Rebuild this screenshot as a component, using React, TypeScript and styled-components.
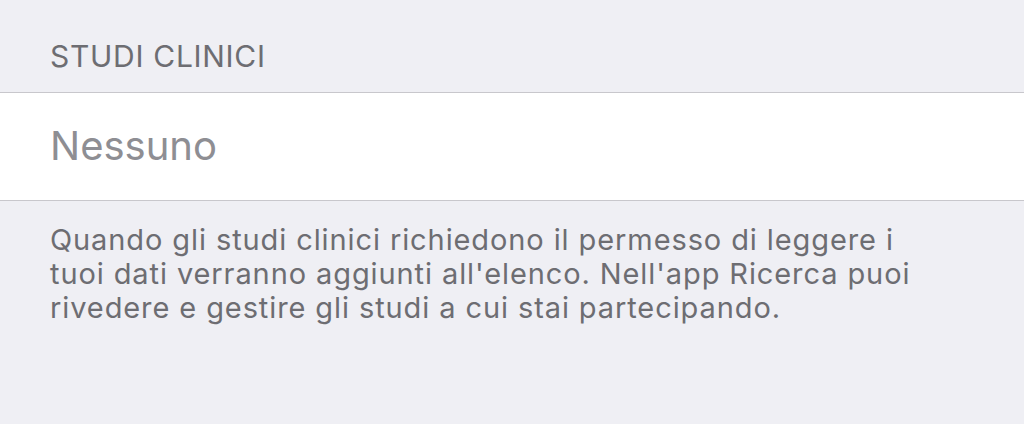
import styled, { createGlobalStyle } from 'styled-components';

const GlobalStyle = createGlobalStyle`
  html, body {
    margin: 0;
    padding: 0;
    background: #efeff4;
    font-family: Inter, "Liberation Sans", Arial, sans-serif;
    -webkit-font-smoothing: antialiased;
  }
`;

const Page = styled.div`
  width: 1024px;
  height: 424px;
  overflow: hidden;
  background: #efeff4;
`;

const SectionHeader = styled.div`
  height: 92px;
  box-sizing: border-box;
  padding: 38px 50px 0;
  font-size: 30px;
  line-height: 36px;
  letter-spacing: 0.7px;
  color: #6d6d72;
`;

const Cell = styled.div`
  height: 109px;
  box-sizing: border-box;
  background: #fff;
  border-top: 1px solid #c8c7cc;
  border-bottom: 1px solid #c8c7cc;
  display: flex;
  align-items: center;
  padding: 0 50px 2px;
  font-size: 40px;
  color: #8e8e93;
`;

const Footer = styled.p`
  margin: 0;
  padding: 22px 50px 0;
  font-size: 29px;
  line-height: 34px;
  letter-spacing: 0.9px;
  color: #6d6d72;
`;

export default function App() {
  return (
    <Page>
      <GlobalStyle />
      <SectionHeader>STUDI CLINICI</SectionHeader>
      <Cell>Nessuno</Cell>
      <Footer>
        Quando gli studi clinici richiedono il permesso di leggere i
        <br />
        tuoi dati verranno aggiunti all'elenco. Nell'app Ricerca puoi
        <br />
        rivedere e gestire gli studi a cui stai partecipando.
      </Footer>
    </Page>
  );
}
